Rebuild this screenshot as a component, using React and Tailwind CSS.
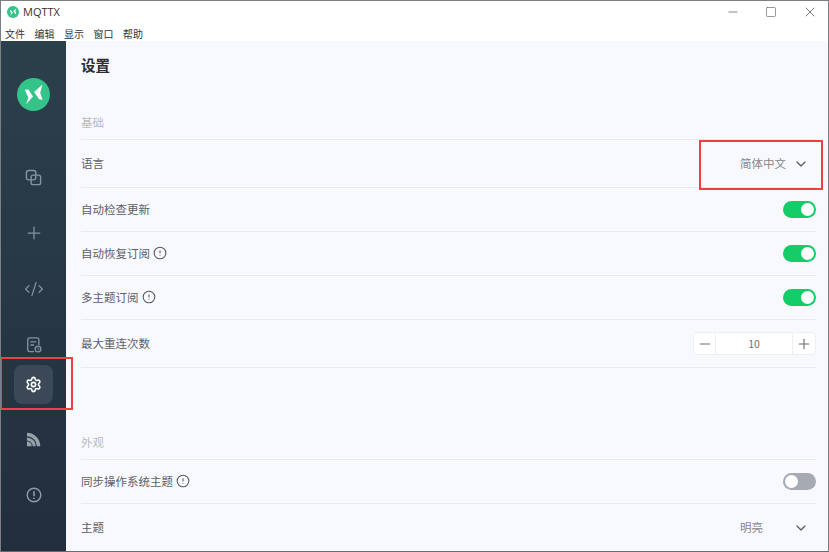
import React from 'react';
import { Plus, CodeXml, Settings, CircleAlert, ChevronDown, Minus, Square, X } from 'lucide-react';

const cjk = { fontFamily: '"Noto Sans CJK SC", "Noto Sans", sans-serif' };

const Logo = ({ size }) => (
  <svg width={size} height={size} viewBox="0 0 32 32">
    <circle cx="16" cy="16" r="16" fill="#34c388" />
    <path d="M7.5 11.5l3.5-.3 4.5 6.8-6.6 7.5 2.1-6.5z" fill="#fff" />
    <path d="M24.5 6.5l-8 7 5 7 3.3.5-2.3-6.5z" fill="#fff" />
  </svg>
);

const Connections = () => (
  <svg width="17" height="17" viewBox="0 0 18 18" fill="none" stroke="#84949f" strokeWidth="1.5">
    <rect x="1.5" y="1.5" width="10" height="10" rx="2.5" />
    <rect x="6.5" y="6.5" width="10" height="10" rx="2" />
  </svg>
);

const Script = () => (
  <svg width="16" height="16" viewBox="0 0 18 18" fill="none" stroke="#84949f" strokeWidth="1.5">
    <path d="M9 16.5H4a2 2 0 0 1-2-2V3a2 2 0 0 1 2-2h8.5a2 2 0 0 1 2 2v6" />
    <path d="M5 5.5h6.5M5 9h4" />
    <circle cx="13.5" cy="13.5" r="3.2" />
    <path d="M13.5 12v1.6h1.4" strokeWidth="1" />
  </svg>
);

const Rss = () => (
  <svg width="15" height="15" viewBox="0 0 16 16" fill="#95a1ab">
    <path d="M1 5.8v3.2a6.2 6.2 0 0 1 6.2 6.2h3.2A9.4 9.4 0 0 0 1 5.8z" />
    <path d="M1 .8v3.8a10.6 10.6 0 0 1 10.6 10.6h3.6A14.4 14.4 0 0 0 1 .8z" />
    <path d="M1 10v5.2h5.2A5.2 5.2 0 0 0 1 10z" />
  </svg>
);

const About = () => (
  <svg width="16" height="16" viewBox="0 0 16 16" fill="none" stroke="#8e9da8" strokeWidth="1.4">
    <circle cx="8" cy="8" r="6.8" />
    <path d="M8 4.2v5" strokeWidth="1.6" />
    <path d="M8 10.8v1.2" strokeWidth="1.6" />
  </svg>
);

const NavItem = ({ children, active }) => (
  <div className={`flex items-center justify-center w-[39px] rounded-lg ${active ? 'h-[39px] bg-[#3a4857]' : 'h-[56px]'}`}>
    {children}
  </div>
);

const Sidebar = () => (
  <aside className="w-[65px] shrink-0 flex flex-col items-center bg-gradient-to-b from-[#2c404c] to-[#222e3e]">
    <div className="mt-[37px] mb-[38px]">
      <Logo size={33} />
    </div>
    <NavItem><Connections /></NavItem>
    <NavItem><Plus size={20} color="#84949f" strokeWidth={1.5} /></NavItem>
    <NavItem><CodeXml size={20} color="#84949f" strokeWidth={1.5} /></NavItem>
    <NavItem><Script /></NavItem>
    <div className="-mt-[8px]">
      <NavItem active><Settings size={17} color="#ffffff" strokeWidth={2.3} /></NavItem>
    </div>
    <div className="mt-[7px]">
      <NavItem><Rss /></NavItem>
    </div>
    <NavItem><About /></NavItem>
  </aside>
);

const Switch = ({ on }) => (
  <div className={`w-[33px] h-[17px] rounded-full flex items-center px-[2px] ${on ? 'justify-end bg-[#14cc68]' : 'justify-start bg-[#a6abb3]'}`}>
    <div className="w-[13px] h-[13px] rounded-full bg-white" />
  </div>
);

const Select = ({ value }) => (
  <div className="flex items-center text-[11.5px] text-[#85868a]">
    <span className="w-[46px]">{value}</span>
    <ChevronDown size={16} color="#55585e" strokeWidth={1.8} className="ml-[7px] mr-[7px]" />
  </div>
);

const NumberInput = () => (
  <div className="w-[123px] h-[23px] flex items-center bg-white border border-[#eeeff4] rounded text-[10.5px] text-[#6f7278]">
    <div className="w-[22px] h-full flex items-center justify-center border-r border-[#eeeff4]">
      <Minus size={16} color="#666a70" strokeWidth={1.6} />
    </div>
    <div className="flex-1 text-center">10</div>
    <div className="w-[23px] h-full flex items-center justify-center border-l border-[#eeeff4]">
      <Plus size={16} color="#666a70" strokeWidth={1.6} />
    </div>
  </div>
);

const Row = ({ label, tip, tall, children }) => (
  <div className={`flex items-center justify-between border-b border-[#e9eaef] ${tall ? 'h-[48px]' : 'h-[44px]'}`}>
    <div className="flex items-center text-[11.5px] text-[#5d6065]">
      <span>{label}</span>
      {tip && <CircleAlert size={14} color="#55585e" strokeWidth={1.8} className="ml-[3px] -mt-[1px]" />}
    </div>
    {children}
  </div>
);

const SectionTitle = ({ children, className }) => (
  <div className={`h-[17px] flex items-center text-[11.5px] text-[#b9bbc0] ${className}`}>{children}</div>
);

export default function App() {
  return (
    <div className="relative w-[829px] h-[552px] overflow-hidden flex flex-col bg-white border border-[#7c7f82] border-b-[#6a6a6a]" style={cjk}>
      {/* Title bar */}
      <div className="h-[22px] shrink-0 flex items-center justify-between">
        <div className="flex items-center pl-[6px] gap-[4px]">
          <Logo size={12} />
          <span className="text-[11px] text-[#333]" style={{ fontFamily: '"Open Sans", sans-serif' }}>MQTTX</span>
        </div>
        <div className="flex items-center text-[#555]">
          <div className="w-[34px] flex justify-center"><Minus size={14} strokeWidth={1.2} /></div>
          <div className="w-[42px] flex justify-center"><Square size={12} strokeWidth={1.2} /></div>
          <div className="w-[36px] flex justify-center"><X size={16} strokeWidth={1.2} /></div>
        </div>
      </div>
      {/* Menu */}
      <div className="h-[18px] shrink-0 flex items-center gap-[9.5px] pl-[4px] pt-[2px] text-[10px] text-[#333]">
        <span>文件</span>
        <span>编辑</span>
        <span>显示</span>
        <span>窗口</span>
        <span>帮助</span>
      </div>

      <div className="flex flex-1 min-h-0">
        <Sidebar />
        <main className="flex-1 min-w-0 bg-[#f8f9fe] pl-[15px] pr-[12px] overflow-hidden">
          <h1 className="mt-[14px] h-[20px] flex items-center text-[14.5px] font-bold text-[#2c2e33]">设置</h1>

          <SectionTitle className="mt-[39px] mb-[8px]">基础</SectionTitle>
          <div className="border-t border-[#e9eaef]">
            <Row label="语言" tall><Select value="简体中文" /></Row>
            <Row label="自动检查更新"><Switch on /></Row>
            <Row label="自动恢复订阅" tip><Switch on /></Row>
            <Row label="多主题订阅" tip><Switch on /></Row>
            <Row label="最大重连次数" tall><NumberInput /></Row>
          </div>

          <SectionTitle className="mt-[66px] mb-[8px]">外观</SectionTitle>
          <div className="border-t border-[#e9eaef]">
            <Row label="同步操作系统主题" tip><Switch /></Row>
            <Row label="主题" tall><Select value="明亮" /></Row>
          </div>
        </main>
      </div>

      {/* annotation boxes */}
      <div className="absolute left-[-1px] top-[356px] w-[73px] h-[53px] border-2 border-[#ee3f45]" />
      <div className="absolute left-[698px] top-[139px] w-[124px] h-[50px] border-2 border-[#ee3f45]" />
    </div>
  );
}
